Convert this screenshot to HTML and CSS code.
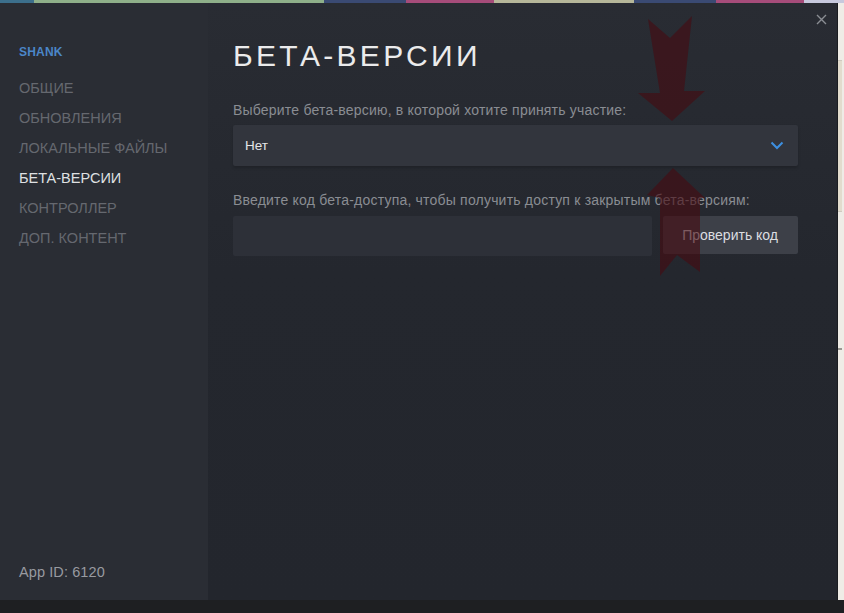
FILE: index.html
```html
<!DOCTYPE html>
<html lang="ru">
<head>
    <meta charset="UTF-8">
    <title>Свойства — SHANK</title>
    <link rel="stylesheet" href="styles.css">
</head>
<body>

<div class="topstrip">
    <span class="seg blue"></span>
    <span class="seg green"></span>
    <span class="seg navy"></span>
    <span class="seg pink"></span>
    <span class="seg sand"></span>
    <span class="seg navy"></span>
    <span class="seg pink"></span>
    <span class="seg pale"></span>
</div>

<div class="screen">
    <div class="dialog">
        <!-- Sidebar -->
        <div class="sidebar">
            <div class="game">SHANK</div>
            <div class="nav">
                <div class="nav-item">ОБЩИЕ</div>
                <div class="nav-item">ОБНОВЛЕНИЯ</div>
                <div class="nav-item">ЛОКАЛЬНЫЕ ФАЙЛЫ</div>
                <div class="nav-item active">БЕТА-ВЕРСИИ</div>
                <div class="nav-item">КОНТРОЛЛЕР</div>
                <div class="nav-item">ДОП. КОНТЕНТ</div>
            </div>
            <div class="appid">App ID: 6120</div>
        </div>

        <!-- Content -->
        <div class="content">
            <h1>БЕТА-ВЕРСИИ</h1>

            <div class="label">Выберите бета-версию, в которой хотите принять участие:</div>
            <div class="select">
                <span>Нет</span>
                <svg width="14" height="9" viewBox="0 0 14 9"><path d="M1.5 1.5 L7 7 L12.5 1.5" fill="none" stroke="#3d8fe0" stroke-width="2"/></svg>
            </div>

            <div class="label second">Введите код бета-доступа, чтобы получить доступ к закрытым бета-версиям:</div>
            <div class="code-row">
                <div class="code-input"></div>
                <div class="btn">Проверить код</div>
            </div>
        </div>

        <div class="close">
            <svg width="11" height="11" viewBox="0 0 11 11"><path d="M1 1 L10 10 M10 1 L1 10" stroke="#8a8d93" stroke-width="1.4"/></svg>
        </div>

        <!-- annotation arrows -->
        <svg class="arrows" width="90" height="275" viewBox="0 0 90 275">
            <polygon points="18,15 40,34 62,12 54,87 75,87 42,117 8,89 30,89" />
            <polygon points="43,164 75,194 70,194 70,268 47,251 30,272 30,194 17,191" />
        </svg>
    </div>
    <div class="backdrop">
        <span class="tick"></span>
        <span class="tick low"></span>
    </div>
</div>

<div class="taskbar"></div>

</body>
</html>
```

FILE: styles.css
```css
body {
    margin: 0;
    background-color: #ebe8e1;
    font-family: "Liberation Sans", Arial, sans-serif;
    overflow: hidden;
}

.topstrip {
    display: flex;
    height: 3px;
}

.seg {
    display: block;
    height: 3px;
}

.seg.blue { width: 34px; background-color: #3c6f8c; }
.seg.green { width: 290px; background-color: #8fb08a; }
.seg.navy { width: 82px; background-color: #3a4a73; }
.seg.pink { width: 88px; background-color: #a64c7a; }
.seg.sand { width: 140px; background-color: #b6b79a; }
.seg.pale { flex: 1; background-color: #c7c9dd; }

.screen {
    display: flex;
    height: 597px;
}

.dialog {
    position: relative;
    display: flex;
    width: 837px;
    background-color: #24272e;
    border-right: 1px solid #1a1c20;
}

.backdrop {
    position: relative;
    flex: 1;
    background-color: #efece6;
}

.tick {
    position: absolute;
    left: 0;
    top: 57px;
    width: 4px;
    height: 150px;
    background-color: #e2dccd;
    border-top: 1px solid #cfcac0;
    border-bottom: 1px solid #cfcac0;
}

.tick.low {
    top: 345px;
    height: 2px;
    background-color: #9a9892;
    border: none;
}

.sidebar {
    display: flex;
    flex-direction: column;
    width: 189px;
    padding: 42px 0 20px 19px;
    background-color: #2a2d34;
}

.game {
    font-size: 12px;
    font-weight: bold;
    color: #4b86c8;
    letter-spacing: 0.2px;
}

.nav {
    margin-top: 20px;
}

.nav-item {
    height: 30px;
    line-height: 18px;
    font-size: 14.5px;
    color: #65686f;
}

.nav-item.active {
    color: #dfe0e2;
}

.appid {
    margin-top: auto;
    font-size: 14.5px;
    color: #989aa0;
    letter-spacing: 0.1px;
}

.content {
    flex: 1;
    padding: 35px 39px 0 25px;
    background: linear-gradient(180deg, #292c33 0%, #24272e 45%, #23262d 100%);
}

h1 {
    margin: 0;
    font-size: 30px;
    font-weight: normal;
    letter-spacing: 3.3px;
    color: #ebebec;
    line-height: 36px;
}

.label {
    margin-top: 28px;
    font-size: 14px;
    letter-spacing: 0.2px;
    color: #8a8d93;
}

.label.second {
    margin-top: 26px;
}

.select {
    display: flex;
    align-items: center;
    justify-content: space-between;
    height: 41px;
    margin-top: 7px;
    padding: 0 14px 0 12px;
    background-color: #32353d;
    border-radius: 2px;
    box-shadow: 0 2px 3px rgba(0,0,0,0.18);
    font-size: 13.5px;
    color: #e4e5e7;
}

.code-row {
    display: flex;
    gap: 11px;
    margin-top: 8px;
}

.code-input {
    flex: 1;
    height: 40px;
    background-color: #2d3038;
    border-radius: 2px;
}

.btn {
    display: flex;
    align-items: center;
    justify-content: flex-end;
    width: 135px;
    height: 38px;
    padding-right: 20px;
    box-sizing: border-box;
    background-color: #3d4048;
    border-radius: 2px;
    font-size: 14px;
    color: #dcdde0;
}

.close {
    position: absolute;
    top: 8px;
    right: 10px;
}

.arrows {
    position: absolute;
    left: 630px;
    top: 1px;
}

.arrows polygon {
    fill: rgba(70, 12, 18, 0.62);
}

.taskbar {
    height: 13px;
    background-color: #1e1f22;
}
```
